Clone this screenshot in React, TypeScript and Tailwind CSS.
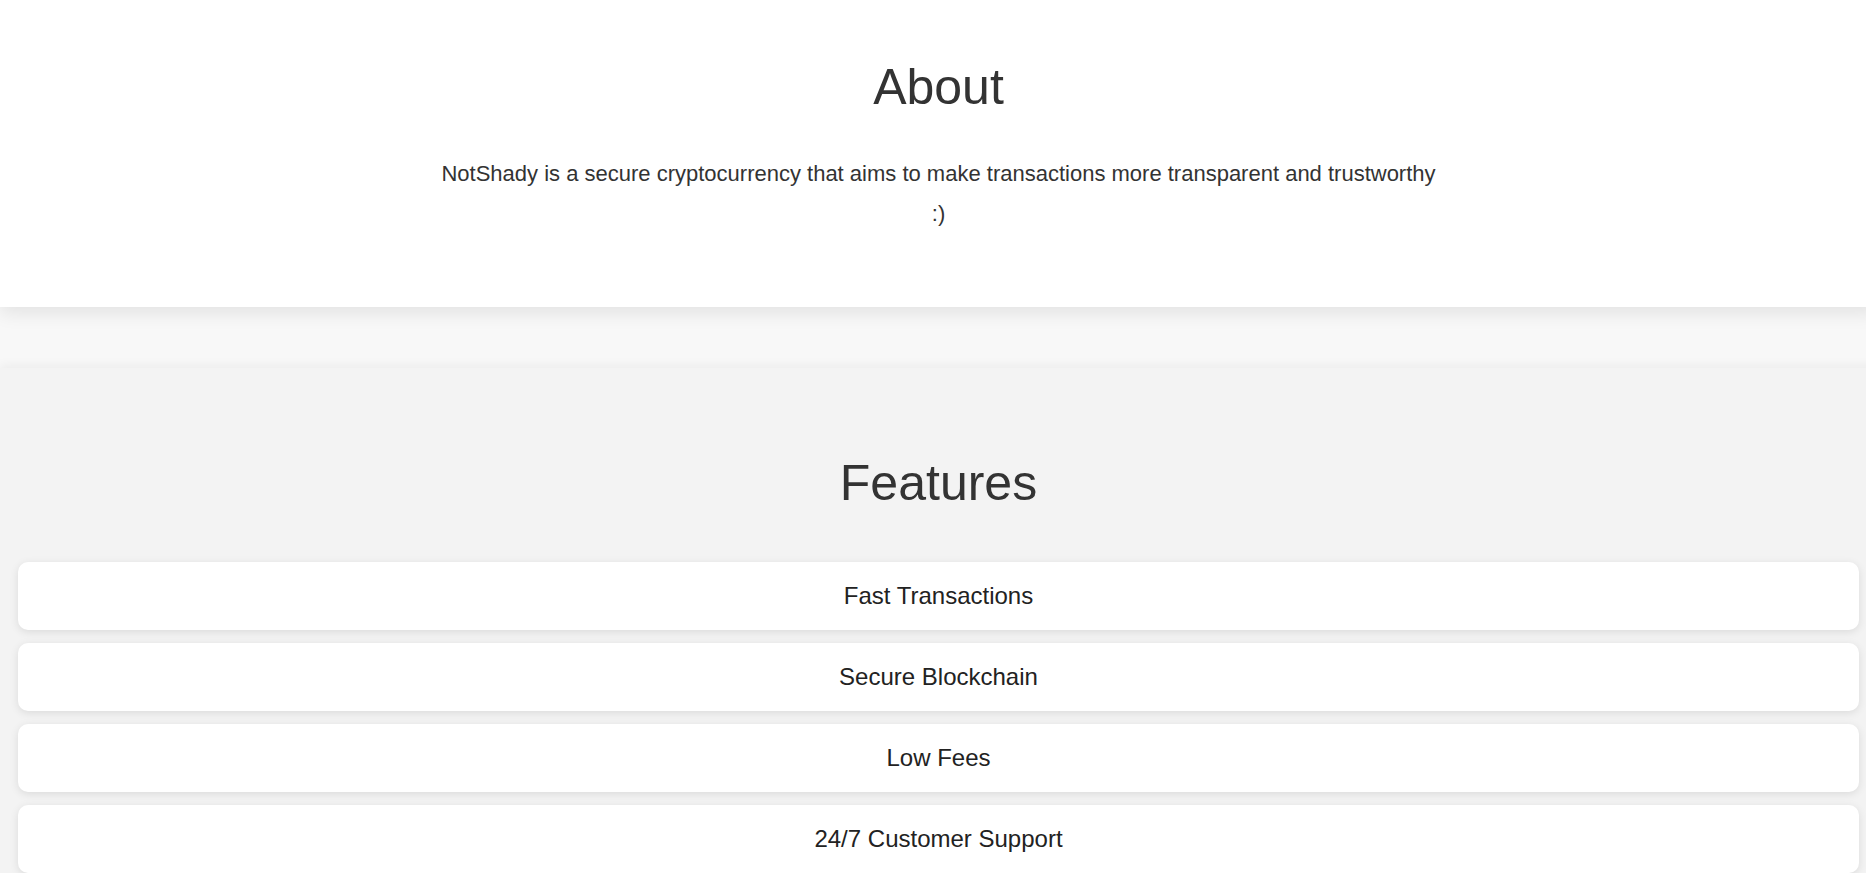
const features = ["Fast Transactions", "Secure Blockchain", "Low Fees", "24/7 Customer Support"];

const FeatureCard = ({ label }: { label: string }) => {
  return (
    <div className="bg-white rounded-[10px] shadow-[0_2px_8px_rgba(0,0,0,0.1)] h-[68px] flex items-center justify-center text-[24px] text-[#222]">
      {label}
    </div>
  );
};

const App = () => {
  return (
    <div className="w-full overflow-x-hidden bg-[#f3f3f3] min-h-screen font-['Liberation_Sans',Arial,sans-serif]">
      <div className="w-[1877px]">
        <section className="relative z-10 bg-white shadow-[0_6px_18px_rgba(0,0,0,0.09)] pt-[59px] pb-[73px] flex flex-col items-center text-[#333]">
          <h2 className="text-[50px] leading-[1.15]">About</h2>
          <p className="mt-[37px] max-w-[1000px] text-center text-[22px] leading-[40px]">
            NotShady is a secure cryptocurrency that aims to make transactions more transparent and trustworthy :)
          </p>
        </section>
        <div className="h-[61px] bg-[#f8f8f8]" />
        <section className="relative bg-[#f3f3f3] shadow-[0_-3px_10px_rgba(0,0,0,0.05)] pt-[87px] pb-10 px-[18px]">
          <h2 className="text-[50px] leading-[1.15] text-center text-[#333]">Features</h2>
          <div className="mt-[50px] flex flex-col gap-[13px]">
            {features.map((f) => (
              <FeatureCard key={f} label={f} />
            ))}
          </div>
        </section>
      </div>
    </div>
  );
};

export default App;
